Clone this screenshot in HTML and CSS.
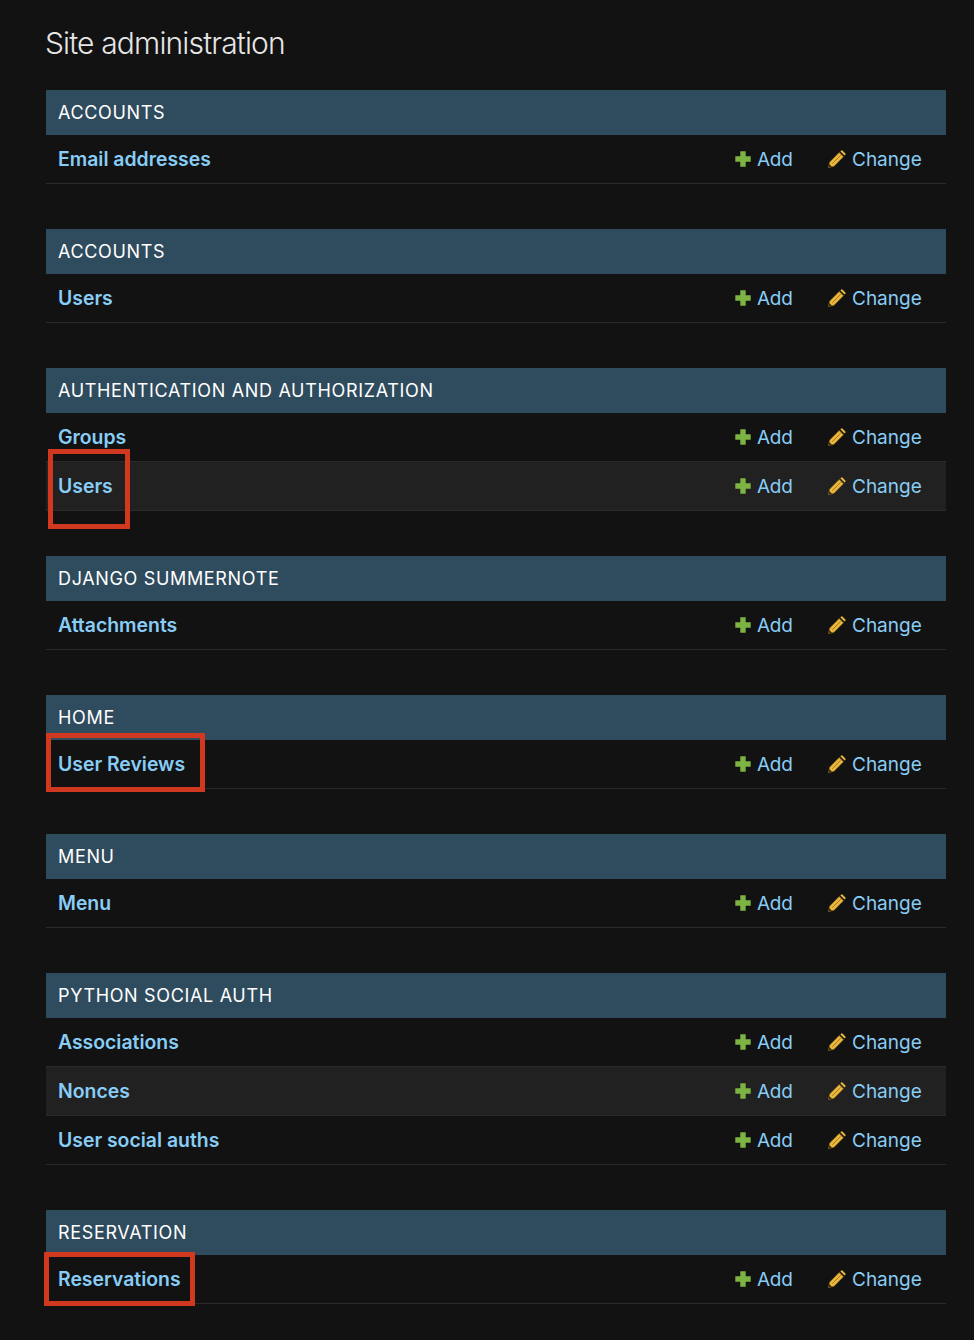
FILE: index.html
```html
<!DOCTYPE html>
<html lang="en">
<head>
    <meta charset="UTF-8">
    <meta name="viewport" content="width=device-width, initial-scale=1.0">
    <title>Site administration</title>
    <link rel="stylesheet" href="styles.css">
</head>
<body>
    <svg class="defs" width="0" height="0" aria-hidden="true">
        <symbol id="icon-add" viewBox="0 0 16 16">
            <path d="M5.3 0.3h5.4v5h5v5.4h-5v5H5.3v-5h-5V5.3h5z" fill="#7cb342"/>
        </symbol>
        <symbol id="icon-change" viewBox="0 0 18 18">
            <path d="M1.8 12 11.2 2.6 15.4 6.8 6 16.2 0.5 17.5z" fill="#ecb73f" stroke="#9a7218" stroke-width="0.7" stroke-linejoin="round"/>
            <path d="M12.4 1.4 13.2 0.6Q13.8 0.1 14.4 0.6L17.4 3.6Q17.9 4.2 17.4 4.8L16.6 5.6z" fill="#ecb73f"/>
            <path d="M1.3 14 4 16.7 0.5 17.5z" fill="#3a2c10"/>
            <path d="M4.2 13.8 12.6 5.4" stroke="#9a7218" stroke-width="0.9" fill="none"/>
        </symbol>
    </svg>

    <main class="content">
        <h1>Site administration</h1>

        <section class="module">
            <h2>Accounts</h2>
            <div class="model-row">
                <a class="model-name" href="#">Email addresses</a>
                <a class="action add" href="#"><svg><use href="#icon-add"/></svg>Add</a>
                <a class="action change" href="#"><svg><use href="#icon-change"/></svg>Change</a>
            </div>
        </section>

        <section class="module">
            <h2>Accounts</h2>
            <div class="model-row">
                <a class="model-name" href="#">Users</a>
                <a class="action add" href="#"><svg><use href="#icon-add"/></svg>Add</a>
                <a class="action change" href="#"><svg><use href="#icon-change"/></svg>Change</a>
            </div>
        </section>

        <section class="module">
            <h2>Authentication and Authorization</h2>
            <div class="model-row">
                <a class="model-name" href="#">Groups</a>
                <a class="action add" href="#"><svg><use href="#icon-add"/></svg>Add</a>
                <a class="action change" href="#"><svg><use href="#icon-change"/></svg>Change</a>
            </div>
            <div class="model-row">
                <a class="model-name" href="#">Users</a>
                <a class="action add" href="#"><svg><use href="#icon-add"/></svg>Add</a>
                <a class="action change" href="#"><svg><use href="#icon-change"/></svg>Change</a>
            </div>
        </section>

        <section class="module">
            <h2>Django Summernote</h2>
            <div class="model-row">
                <a class="model-name" href="#">Attachments</a>
                <a class="action add" href="#"><svg><use href="#icon-add"/></svg>Add</a>
                <a class="action change" href="#"><svg><use href="#icon-change"/></svg>Change</a>
            </div>
        </section>

        <section class="module">
            <h2>Home</h2>
            <div class="model-row">
                <a class="model-name" href="#">User Reviews</a>
                <a class="action add" href="#"><svg><use href="#icon-add"/></svg>Add</a>
                <a class="action change" href="#"><svg><use href="#icon-change"/></svg>Change</a>
            </div>
        </section>

        <section class="module">
            <h2>Menu</h2>
            <div class="model-row">
                <a class="model-name" href="#">Menu</a>
                <a class="action add" href="#"><svg><use href="#icon-add"/></svg>Add</a>
                <a class="action change" href="#"><svg><use href="#icon-change"/></svg>Change</a>
            </div>
        </section>

        <section class="module">
            <h2>Python Social Auth</h2>
            <div class="model-row">
                <a class="model-name" href="#">Associations</a>
                <a class="action add" href="#"><svg><use href="#icon-add"/></svg>Add</a>
                <a class="action change" href="#"><svg><use href="#icon-change"/></svg>Change</a>
            </div>
            <div class="model-row">
                <a class="model-name" href="#">Nonces</a>
                <a class="action add" href="#"><svg><use href="#icon-add"/></svg>Add</a>
                <a class="action change" href="#"><svg><use href="#icon-change"/></svg>Change</a>
            </div>
            <div class="model-row">
                <a class="model-name" href="#">User social auths</a>
                <a class="action add" href="#"><svg><use href="#icon-add"/></svg>Add</a>
                <a class="action change" href="#"><svg><use href="#icon-change"/></svg>Change</a>
            </div>
        </section>

        <section class="module">
            <h2>Reservation</h2>
            <div class="model-row">
                <a class="model-name" href="#">Reservations</a>
                <a class="action add" href="#"><svg><use href="#icon-add"/></svg>Add</a>
                <a class="action change" href="#"><svg><use href="#icon-change"/></svg>Change</a>
            </div>
        </section>
    </main>

    <!-- red annotation boxes drawn over the screenshot -->
    <div class="mark mark-users"></div>
    <div class="mark mark-reviews"></div>
    <div class="mark mark-reservations"></div>
</body>
</html>
```

FILE: styles.css
```css
html {
    background: #121212;
}
body {
    position: relative;
    margin: 0;
    height: 1340px;
    overflow: hidden;
    background: #121212;
    color: #eeeeee;
    font-family: Inter, "Liberation Sans", sans-serif;
}
a {
    text-decoration: none;
}
.defs {
    position: absolute;
}
.content {
    padding: 0 28px 0 46px;
}
h1 {
    margin: 0 0 0 -1px;
    height: 90px;
    padding-top: 25px;
    box-sizing: border-box;
    font-size: 30px;
    line-height: 37px;
    font-weight: 300;
    letter-spacing: -0.85px;
    color: #e6e6e6;
}
.module {
    margin-bottom: 45px;
}
.module h2 {
    margin: 0;
    height: 45px;
    padding: 0 12px;
    background: #2f4b5e;
    color: #ffffff;
    font-size: 18px;
    font-weight: 400;
    line-height: 45px;
    letter-spacing: 0.66px;
    text-transform: uppercase;
}
.model-row {
    display: flex;
    align-items: center;
    height: 49px;
    box-sizing: border-box;
    padding: 0 24px 0 12px;
    border-bottom: 1px solid #2a2a2a;
    font-size: 19px;
    color: #88cdf6;
}
.model-row:nth-of-type(even) {
    background: #212121;
}
.model-row a {
    color: #88cdf6;
}
.model-name {
    flex: 1;
    font-size: 19.4px;
    line-height: 24px;
    font-weight: 600;
}
.action {
    display: flex;
    align-items: center;
}
.action svg {
    flex: none;
}
.add {
    width: 57px;
    margin-right: 36px;
    letter-spacing: -0.25px;
}
.add svg {
    width: 16px;
    height: 16px;
    margin-right: 6px;
}
.change {
    width: 94px;
}
.change svg {
    width: 18px;
    height: 18px;
    margin-right: 6px;
}
.mark {
    position: absolute;
    box-sizing: border-box;
    border: 5px solid #d0381f;
}
.mark-users {
    left: 48px;
    top: 449px;
    width: 82px;
    height: 80px;
}
.mark-reviews {
    left: 46px;
    top: 733px;
    width: 159px;
    height: 59px;
}
.mark-reservations {
    left: 44px;
    top: 1252px;
    width: 151px;
    height: 54px;
}
```
